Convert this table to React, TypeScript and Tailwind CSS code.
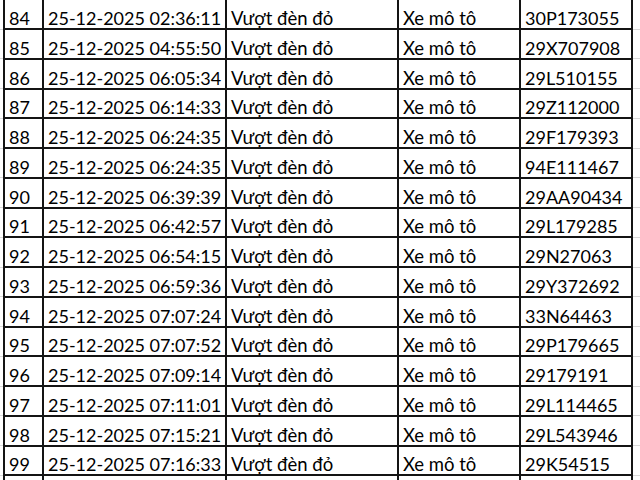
import React from "react";

const rows: Array<[string, string, string]> = [
  ["84", "25-12-2025 02:36:11", "30P173055"],
  ["85", "25-12-2025 04:55:50", "29X707908"],
  ["86", "25-12-2025 06:05:34", "29L510155"],
  ["87", "25-12-2025 06:14:33", "29Z112000"],
  ["88", "25-12-2025 06:24:35", "29F179393"],
  ["89", "25-12-2025 06:24:35", "94E111467"],
  ["90", "25-12-2025 06:39:39", "29AA90434"],
  ["91", "25-12-2025 06:42:57", "29L179285"],
  ["92", "25-12-2025 06:54:15", "29N27063"],
  ["93", "25-12-2025 06:59:36", "29Y372692"],
  ["94", "25-12-2025 07:07:24", "33N64463"],
  ["95", "25-12-2025 07:07:52", "29P179665"],
  ["96", "25-12-2025 07:09:14", "29179191"],
  ["97", "25-12-2025 07:11:01", "29L114465"],
  ["98", "25-12-2025 07:15:21", "29L543946"],
  ["99", "25-12-2025 07:16:33", "29K54515"],
];

const cell = "flex items-end pl-[4px] pb-[1px] border-r-2 border-b-2 border-[#141414] whitespace-nowrap overflow-hidden";

export default function App() {
  return (
    <div
      className="w-[640px] h-[480px] overflow-hidden bg-white text-black text-[18px] leading-[18px]"
      style={{ fontFamily: "Lato, 'Open Sans', sans-serif" }}
    >
      <div className="pt-[0.25px]">
        {rows.map(([no, time, plate]) => (
          <div key={no} className="flex h-[29.75px]">
            {/* excel gridline left */}
            <div className="w-[3px] self-stretch border-b border-[#d9d9d9] mb-[0.5px]" />
            <div className="flex border-l-2 border-[#141414]">
              <div className={`${cell} w-[39px]`}>{no}</div>
              <div className={`${cell} w-[183px]`}>{time}</div>
              <div className={`${cell} w-[172px] text-[18.5px]`}>Vượt đèn đỏ</div>
              <div className={`${cell} w-[122px] text-[18.5px]`}>Xe mô tô</div>
              <div className={`${cell} w-[112px]`}>{plate}</div>
            </div>
            {/* excel gridline right */}
            <div className="flex-1 self-stretch border-b border-[#d9d9d9] mb-[0.5px]" />
          </div>
        ))}

        {/* next row, cut off by the window */}
        <div className="flex h-[29.75px]">
          <div className="w-[3px]" />
          <div className="flex border-l-2 border-[#141414]">
            <div className="w-[39px] border-r-2 border-[#141414]" />
            <div className="w-[183px] border-r-2 border-[#141414]" />
            <div className="w-[172px] border-r-2 border-[#141414]" />
            <div className="w-[122px] border-r-2 border-[#141414]" />
            <div className="w-[112px] border-r-2 border-[#141414]" />
          </div>
        </div>
      </div>
    </div>
  );
}
